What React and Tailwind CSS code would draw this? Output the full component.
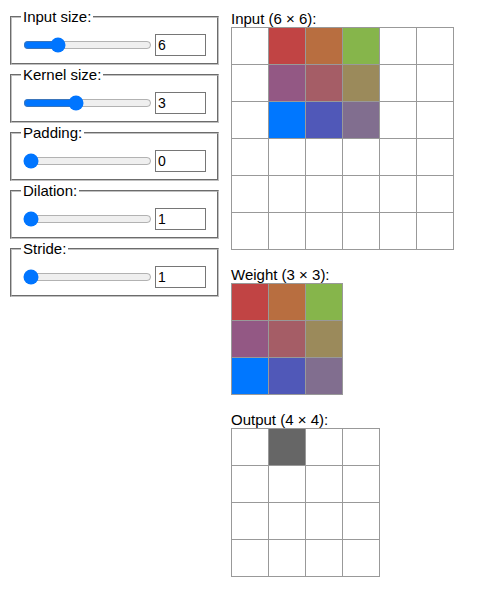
import React, { useState } from 'react';

const INPUT_COLORS = {
  '0-1': '#c14444', '0-2': '#b86e40', '0-3': '#86b54b',
  '1-1': '#935884', '1-2': '#a55d66', '1-3': '#9b8a5b',
  '2-1': '#0077ff', '2-2': '#5058b8', '2-3': '#816e8f',
};

const WEIGHT_COLORS = [
  '#c14444', '#b86e40', '#86b54b',
  '#935884', '#a55d66', '#9b8a5b',
  '#0077ff', '#5058b8', '#816e8f',
];

const Control = ({ label, value, min, max, onChange }) => (
  <fieldset className="mx-0.5 mb-px border-2 [border-style:groove] border-[#c0c0c0] pl-[9px] pr-2 pt-[9px] pb-[7px]">
    <legend className="px-0.5 leading-[17px]">{label}</legend>
    <div className="flex items-center">
      <input
        type="range"
        min={min}
        max={max}
        value={value}
        onChange={(e) => onChange(Number(e.target.value))}
        className="w-[129px] mx-0.5 accent-[#0075ff]"
      />
      <input
        type="number"
        min={min}
        max={max}
        value={value}
        onChange={(e) => onChange(Number(e.target.value))}
        className="ml-px w-[51px] h-[22px] border border-[#767676] px-0.5 text-[14px] leading-none [appearance:textfield]"
      />
    </div>
  </fieldset>
);

const Grid = ({ size, colorAt }) => (
  <div
    className="grid w-fit gap-px bg-[#999] p-px"
    style={{ gridTemplateColumns: `repeat(${size}, 36px)` }}
  >
    {Array.from({ length: size * size }).map((_, i) => {
      const r = Math.floor(i / size);
      const c = i % size;
      return (
        <div key={i} className="h-[36px] w-[36px]" style={{ backgroundColor: colorAt(r, c) || '#fff' }} />
      );
    })}
  </div>
);

export default function App() {
  const [inputSize, setInputSize] = useState(6);
  const [kernel, setKernel] = useState(3);
  const [padding, setPadding] = useState(0);
  const [dilation, setDilation] = useState(1);
  const [stride, setStride] = useState(1);

  const out = Math.floor((inputSize + 2 * padding - dilation * (kernel - 1) - 1) / stride) + 1;

  return (
    <div className="flex gap-2.5 p-2 text-[15px] text-black" style={{ fontFamily: '"Liberation Sans", Arial, sans-serif' }}>
      <div className="w-[213px] shrink-0">
        <Control label="Input size:" value={inputSize} min={1} max={22} onChange={setInputSize} />
        <Control label="Kernel size:" value={kernel} min={1} max={6} onChange={setKernel} />
        <Control label="Padding:" value={padding} min={0} max={5} onChange={setPadding} />
        <Control label="Dilation:" value={dilation} min={1} max={5} onChange={setDilation} />
        <Control label="Stride:" value={stride} min={1} max={5} onChange={setStride} />
      </div>
      <div className="pt-0.5">
        <div className="leading-[17px]">Input ({inputSize} × {inputSize}):</div>
        <Grid size={inputSize} colorAt={(r, c) => INPUT_COLORS[`${r}-${c}`]} />
        <div className="mt-4 leading-[17px]">Weight ({kernel} × {kernel}):</div>
        <Grid size={kernel} colorAt={(r, c) => WEIGHT_COLORS[r * kernel + c]} />
        <div className="mt-4 leading-[17px]">Output ({out} × {out}):</div>
        <Grid size={out} colorAt={(r, c) => (r === 0 && c === 1 ? '#666' : null)} />
      </div>
    </div>
  );
}
